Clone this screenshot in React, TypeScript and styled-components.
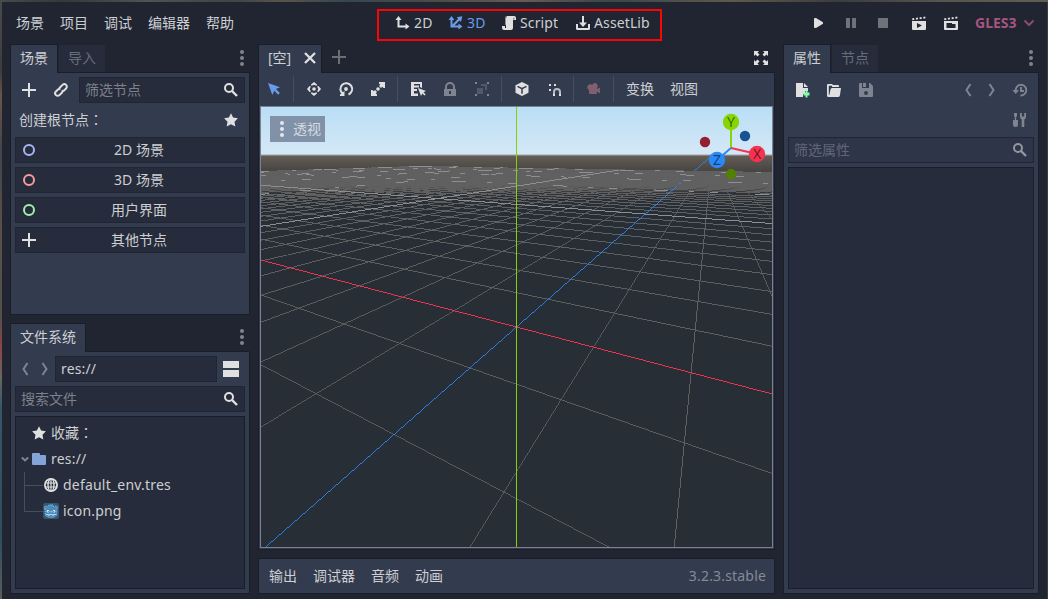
import React from "react";
import styled, { createGlobalStyle } from "styled-components";

const color = {
  base: "#333b4f",
  field: "#262c3b",
  window: "#202531",
  edge: "#1a1e28",
  text: "#cdcfd2",
  dim: "#7f8590",
  icon: "#e0e0e0",
  accent: "#699ce8",
};

const GlobalStyle = createGlobalStyle`
  * { box-sizing: border-box; }
  body {
    margin: 0;
    overflow: hidden;
    background: ${color.window};
    color: ${color.text};
    font: 14px/20px "Noto Sans", "Noto Sans CJK SC", sans-serif;
  }
  svg { display: block; flex: none; }
`;

/* ---------- Icons ---------- */

const glyphs: Record<string, React.ReactNode> = {
  add: <path d="M7 1v6H1v2h6v6h2V9h6V7H9V1z" />,
  link: (
    <g fill="none" stroke="currentColor" strokeWidth="2" transform="rotate(-45 8 8)">
      <path d="M7.500 5.500H3.300a2.500 2.500 0 0 0 0 5h3.400a2.500 2.500 0 0 0 2.300-1.500" />
      <path d="M8.500 10.500h4.200a2.500 2.500 0 0 0 0-5H9.300A2.500 2.500 0 0 0 7 7" />
    </g>
  ),
  search: (
    <g fill="none" stroke="currentColor">
      <circle cx="6" cy="6" r="4" strokeWidth="2" />
      <path d="M9 9l5 5" strokeWidth="2.400" />
    </g>
  ),
  star: <path d="M8 1.300l2.100 4.300 4.800.700-3.400 3.400.8 4.800L8 12.300l-4.300 2.200.8-4.800L1.100 6.300l4.800-.7z" />,
  ring: <circle cx="8" cy="8" r="5" fill="none" stroke="currentColor" strokeWidth="2" />,
  dots: (
    <>
      <circle cx="8" cy="2" r="2" />
      <circle cx="8" cy="8" r="2" />
      <circle cx="8" cy="14" r="2" />
    </>
  ),
  prev: <path d="M10.500 2L6.500 8l4 6" fill="none" stroke="currentColor" strokeWidth="2" />,
  next: <path d="M5.500 2l4 6-4 6" fill="none" stroke="currentColor" strokeWidth="2" />,
  split: <path d="M0 0h16v7H0zM0 9h16v7H0z" />,
  fold: <path d="M4.800 6.500L8 9.500l3.200-3" fill="none" stroke="currentColor" strokeWidth="2" />,
  folder: <path d="M2 2a1 1 0 0 0-1 1v10a1 1 0 0 0 1 1h12a1 1 0 0 0 1-1V5a1 1 0 0 0-1-1H9V3a1 1 0 0 0-1-1z" />,
  globe: (
    <g fill="none" stroke="currentColor" strokeWidth="1.800">
      <circle cx="8" cy="8" r="6.100" />
      <ellipse cx="8" cy="8" rx="3" ry="6.100" strokeWidth="1.400" />
      <path d="M2 6h12M2 10h12M8 2v12" strokeWidth="1.200" />
    </g>
  ),
  robot: (
    <>
      <rect width="16" height="16" rx="2" fill="#355570" />
      <path d="M2 6l-.8-2 1.900-1.300 1.600 1 .8-.2L5.700 2l1.600-.4.5 1.200h.4l.5-1.200 1.600.4.2 1.500.8.200 1.600-1 1.900 1.300L14 6v6Q12 14.500 8 14.500T2 12z" fill="#478cbf" stroke="#a9d3f0" strokeWidth=".8" strokeDasharray="1 1" />
      <circle cx="5" cy="8.200" r="1.200" fill="#fff" />
      <circle cx="11" cy="8.200" r="1.200" fill="#fff" />
      <circle cx="5.200" cy="8.300" r=".6" fill="#414042" />
      <circle cx="10.800" cy="8.300" r=".6" fill="#414042" />
      <path d="M8 8v1.500M3 11.500h2.500v.8h1v-.8h3v.8h1v-.8H13" fill="none" stroke="#e8f3fb" strokeWidth=".7" />
    </>
  ),
  axes2d: <path d="M3.500 1L.5 5h2v7.500h8v2l4-3-4-3v2h-6V5h2z" />,
  axes3d: (
    <path d="M3.500 1L.5 5h2v7.500h8v2l4-3-4-3v2H6.500l5-5L13 7l1.300-5.800L8.700 2.200l1.500 1.600-5.700 5.600V5h2z" />
  ),
  script: (
    <>
      <path d="M6 1v1a1 1 0 0 0-1 1v10H4v-2H1v2a2 2 0 0 0 2 2h7a2 2 0 0 0 2-2V5h3V3a2 2 0 0 0-2-2z" />
      <path d="M6 1a2 2 0 0 0-2 2v7h1V3a1 1 0 0 1 1-1zM12 2.500v2h1.700V3.200z" fill="#8d9098" />
    </>
  ),
  download: <path d="M7 1v6.500H4L8 12l4-4.500H9V1zM1 9v4.500a1.500 1.500 0 0 0 1.500 1.500h11a1.500 1.500 0 0 0 1.500-1.500V9h-2v4H3V9z" />,
  play: <path d="M4 3.800Q4 3 5 3h1l7 4.200v1.600L6 13H5q-1 0-1-.8z" />,
  pause: <path d="M3 3h4v10H3zM9 3h4v10H9z" />,
  stop: <path d="M3 3h10v10H3z" />,
  playScene: (
    <>
      <path d="M1 6h14v8a1 1 0 0 1-1 1H2a1 1 0 0 1-1-1zm5 2v5l5-2.500z" fillRule="evenodd" />
      <path d="M1 3.400l2-.4.5 1.800-2 .4zM4.700 2.900l2-.4.5 1.800-2 .4zM8.400 2.400l2-.4.5 1.800-2 .4zM12.100 1.900l2-.4.500 1.800-2 .4z" />
    </>
  ),
  playCustom: (
    <>
      <path d="M1 6h14v8a1 1 0 0 1-1 1H2a1 1 0 0 1-1-1zm2.500 2v5h9V9H9V8z" fillRule="evenodd" />
      <path d="M1 3.400l2-.4.5 1.800-2 .4zM4.700 2.900l2-.4.5 1.800-2 .4zM8.400 2.400l2-.4.5 1.800-2 .4zM12.100 1.900l2-.4.500 1.800-2 .4z" />
    </>
  ),
  down: <path d="M3.500 5.500L8 10l4.500-4.500" fill="none" stroke="currentColor" strokeWidth="2" />,
  close: <path d="M3 3l10 10M13 3L3 13" fill="none" stroke="currentColor" strokeWidth="2.300" />,
  expand: (
    <path d="M1 1h5L4.500 2.500l2 2-2 2-2-2L1 6zM15 1v5l-1.500-1.500-2 2-2-2 2-2L10 1zM1 15v-5l1.500 1.500 2-2 2 2-2 2L6 15zM15 15h-5l1.500-1.500-2-2 2-2 2 2L15 10z" />
  ),
  select: <path d="M2 2l4.300 12 2-4.300 3.800 4 1.800-1.800-4-3.800L14 6.200z" />,
  move: (
    <>
      <circle cx="8" cy="8" r="1.800" />
      <path d="M8 1L5 3.500v1h1.500L8 3.700l1.500.8H11v-1zM8 15l-3-2.500v-1h1.500l1.500.8 1.500-.8H11v1zM1 8l2.500-3h1v1.500L3.700 8l.8 1.500V11h-1zM15 8l-2.500-3h-1v1.500l.8 1.500-.8 1.500V11h1z" />
    </>
  ),
  rotate: (
    <>
      <circle cx="8" cy="8" r="1.900" />
      <path d="M4.800 12.800a5.900 5.900 0 1 1 5.700.7" fill="none" stroke="currentColor" strokeWidth="2" />
      <path d="M6.500 10v5H2v-1.500z" />
    </>
  ),
  scale: (
    <>
      <circle cx="8" cy="8" r="1.800" />
      <path d="M9 1h6v6h-1.500L12.300 5.800 11 7 9 5l1.200-1.300L9 2.500zM7 15H1V9h1.500l1.200 1.200L5 9l2 2-1.200 1.300L7 13.500z" />
    </>
  ),
  listSelect: (
    <>
      <path d="M1 1h11v6l-2-1V3H4v1.500h5v2H4V8h3v2H4v2.500h4V15H1z" />
      <path d="M8 7l3 8 1.300-2.600 2.200 2.200 1.200-1.200-2.200-2.200L16 10z" />
    </>
  ),
  lock: (
    <path d="M8 1a5 5 0 0 0-5 5v2H2v7h12V8h-1V6a5 5 0 0 0-5-5zm0 2a3 3 0 0 1 3 3v2H5V6a3 3 0 0 1 3-3zM7 10h2v3H7z" fillRule="evenodd" />
  ),
  group: (
    <>
      <path d="M3 7h6v6H3zM7 3h6v6h-2V5H7z" opacity=".42" />
      <path d="M1 1h2v2H1zM13 1h2v2h-2zM1 13h2v2H1zM13 13h2v2h-2z" />
    </>
  ),
  cube: (
    <>
      <path d="M8 1l6.500 3.200v7.600L8 15l-6.500-3.200V4.200z" />
      <path d="M3.500 5.400L8 7.700l4.500-2.300M8 7.700v5.100" fill="none" stroke="#333b4f" strokeWidth="1.500" />
    </>
  ),
  snap: (
    <>
      <path d="M3 3h2v2H3zM8 3h2v2H8zM3 8h2v2H3z" />
      <path d="M8 15v-4a3 3 0 0 1 6 0v4" fill="none" stroke="#b9bcc6" strokeWidth="2" />
      <path d="M7 13h2v2H7zM13 13h2v2h-2z" />
    </>
  ),
  camera: (
    <path d="M9 2a3 3 0 0 0-2.800 2A3 3 0 1 0 3 9v3a1 1 0 0 0 1 1h6a1 1 0 0 0 1-1v-1.500l3 2v-6l-3 1.500V7a3 3 0 0 0-2-5z" />
  ),
  newFile: (
    <>
      <path d="M2 1v14h7v-3h2V9h3V6H9V1zM10 1v4h4z" />
      <path d="M10 10h2V8h2v2h2v3h-2v2h-2v-2h-2z" fill="#7dffa8" transform="translate(-.5 .5)" />
    </>
  ),
  open: (
    <path d="M2 2a1 1 0 0 0-1 1v10.500Q1 15 2.500 15H12q1.500 0 1.900-1.500L15 6H6q-1.300 0-1.500 1.500L3.300 13H2.800V3.800H6V5h7V4q0-1-1-1H7L6 2z" />
  ),
  save: (
    <path d="M2 1a1 1 0 0 0-1 1v12a1 1 0 0 0 1 1h12a1 1 0 0 0 1-1V4l-3-3h-1v5H4V1zm3 0h3v4H5zM8 9a2 2 0 1 1 0 4 2 2 0 0 1 0-4z" fillRule="evenodd" />
  ),
  history: (
    <>
      <path d="M3.700 8.500a5.300 5.300 0 1 1 4.800 4.900M9 5v4h3" fill="none" stroke="currentColor" strokeWidth="1.900" />
      <path d="M.5 8h6.500L3.700 12z" />
    </>
  ),
  tools: (
    <path d="M2 1h3v3l-.8 1v3H6v5q0 2-2.500 2T1 13V8h1.800V5L2 4zM8 1h1.800v3.500h2.400V1H14v4q0 1.500-1.700 2.500V15H9.700V7.500Q8 6.500 8 5z" />
  ),
};

const Icon = ({ name, tint = color.icon }: { name: string; tint?: string }) => (
  <svg width="16" height="16" viewBox="0 0 16 16" fill="currentColor" color={tint}>
    {glyphs[name]}
  </svg>
);

/* ---------- Shell ---------- */

const Desktop = styled.div`
  width: 1048px;
  height: 599px;
  padding: 2px 1px 0 2px;
  background:
    linear-gradient(90deg, #4a4a48, #33383a 6%, #50534f 14%, #3c4547 22%, #5a5348 27%, #33474f 33%, #4c4c44 42%, #6a5a50 50%, #3a4648 58%, #5f594a 70%, #3b3c3d 80%, #55564e 90%, #625d50) top / 100% 2px no-repeat,
    linear-gradient(#4a4a48, #3b3d3d 12%, #6b5547 16%, #41454a 25%, #5a4f48 38%, #534f4b 53%, #8a4646 58%, #6a6660 63%, #35576b 68%, #304d60 90%, #5a5c58) left / 2px 100% no-repeat,
    #3a3d42;
`;

const Editor = styled.div`
  display: flex;
  flex-direction: column;
  height: 597px;
  background: ${color.window};
`;

const MenuBar = styled.header`
  display: flex;
  align-items: center;
  height: 42px;
  padding: 0 0 0 8px;
`;

const Group = styled.div<{ $w?: number; $gap?: number }>`
  display: flex;
  align-items: center;
  gap: ${(p) => p.$gap ?? 4}px;
  width: ${(p) => (p.$w ? `${p.$w}px` : "auto")};
`;

const TextButton = styled.button`
  border: 0;
  padding: 0 6px;
  background: none;
  color: inherit;
  font: inherit;
  white-space: nowrap;
`;

const Modes = styled.nav`
  display: flex;
  align-items: center;
  width: 285px;
  height: 32px;
  margin-top: 4px;
  padding: 0 0 4px 16px;
  border: 2px solid #fb0404;
`;

const Mode = styled.button<{ $w: number; $active?: boolean }>`
  display: flex;
  align-items: center;
  gap: 3px;
  width: ${(p) => p.$w}px;
  padding: 0;
  border: 0;
  background: none;
  color: ${(p) => (p.$active ? color.accent : color.text)};
  font: inherit;
  letter-spacing: 0.12px;
`;

const Runner = styled.div`
  display: flex;
  align-items: center;
  margin-left: 148px;
`;

const Playback = styled(Group)`
  margin-right: 20px;
  svg:first-child { margin-right: 1px; }
`;

const Renderer = styled.div`
  display: flex;
  align-items: center;
  gap: 4px;
  margin-left: 16px;
  color: #a6557f;
  font-weight: 700;
`;

const Main = styled.main`
  display: grid;
  grid-template-columns: 240px 517px 256px;
  gap: 8px;
  height: 550px;
  padding-left: 8px;
`;

const Column = styled.section`
  display: flex;
  flex-direction: column;
  gap: 8px;
`;

const Dock = styled.section<{ $h?: number }>`
  display: flex;
  flex-direction: column;
  height: ${(p) => (p.$h ? `${p.$h}px` : "auto")};
  flex: ${(p) => (p.$h ? "none" : "1")};
  min-height: 0;
`;

const TabStrip = styled.div`
  display: flex;
  align-items: flex-start;
  height: 29px;
  margin-bottom: -1px;
`;

const Tab = styled.div<{ $w: number; $active?: boolean }>`
  display: flex;
  align-items: center;
  gap: 11px;
  position: relative;
  width: ${(p) => p.$w}px;
  height: ${(p) => (p.$active ? 29 : 27)}px;
  margin: ${(p) => (p.$active ? "0 1px 0 0" : "1px 0 0")};
  padding: 0 0 ${(p) => (p.$active ? 3 : 1)}px 9px;
  border: solid ${color.edge};
  border-width: ${(p) => (p.$active ? "1px 1px 0" : "0")};
  background: ${(p) => (p.$active ? color.base : color.field)};
  color: ${(p) => (p.$active ? color.text : "#696d78")};
`;

const TabTools = styled.div<{ $pr: number }>`
  display: flex;
  flex: 1;
  justify-content: flex-end;
  padding: 6px ${(p) => p.$pr}px 0 0;
`;

const TabAdd = styled.div`
  padding: 5px 0 0 8px;
`;

const DockBody = styled.div<{ $pad?: number; $gap?: number }>`
  display: flex;
  flex-direction: column;
  flex: 1;
  gap: ${(p) => p.$gap ?? 4}px;
  min-height: 0;
  padding: ${(p) => p.$pad ?? 4}px;
  border: 1px solid ${color.edge};
  background: ${color.base};
`;

const Row = styled.div<{ $gap?: number }>`
  display: flex;
  align-items: center;
  flex: none;
  gap: ${(p) => p.$gap ?? 4}px;
  height: 26px;
`;

const IconButton = styled.button<{ $w?: number }>`
  display: flex;
  flex: none;
  align-items: center;
  justify-content: center;
  width: ${(p) => p.$w ?? 28}px;
  height: 26px;
  padding: 0;
  border: 0;
  background: none;
`;

const Spacer = styled.div`
  flex: 1;
`;

const Field = styled.div<{ $off?: boolean; $filled?: boolean }>`
  display: flex;
  flex: 1;
  align-items: center;
  justify-content: space-between;
  height: 26px;
  padding: 0 5px;
  border: 1px solid ${color.window};
  background: ${(p) => (p.$off ? "#2f3549" : color.field)};
  color: ${(p) => (p.$filled ? color.text : p.$off ? "#60667a" : "#7d818b")};
  letter-spacing: ${(p) => (p.$filled ? "0.15px" : "normal")};
`;

const Caption = styled.div`
  flex: 1;
  height: 20px;
  padding-left: 4px;
  line-height: 20px;
`;

const Colon = styled.span`
  font-family: "Noto Sans CJK TC", sans-serif;
  line-height: 1;
`;

const NodeButton = styled.button`
  display: grid;
  flex: none;
  grid-template-columns: 16px 1fr;
  align-items: center;
  height: 26px;
  padding: 0 0 0 5px;
  border: 1px solid ${color.window};
  background: ${color.field};
  color: inherit;
  font: inherit;
  text-align: center;
`;

const NodeLabel = styled.span`
  padding-right: 3px;
`;

const Well = styled.div`
  flex: 1;
  padding: 3px 0 0 4px;
  border: 1px solid ${color.edge};
  background: ${color.field};
`;

const TreeRow = styled.div<{ $indent: number }>`
  display: flex;
  align-items: center;
  gap: 4px;
  height: 26px;
  padding-left: ${(p) => p.$indent}px;
  letter-spacing: 0.2px;
`;

const Favorites = styled.span`
  height: 20px;
  letter-spacing: normal;
`;

const Twist = styled.span`
  display: flex;
  justify-content: center;
  width: 10px;
  margin-right: -3px;
`;

const Branches = styled.div`
  background:
    linear-gradient(#484d5b, #484d5b) 4px 0 / 1px 39px no-repeat,
    linear-gradient(#484d5b, #484d5b) 4px 13px / 19px 1px no-repeat,
    linear-gradient(#484d5b, #484d5b) 4px 39px / 19px 1px no-repeat;
`;

const ToolRow = styled.div`
  display: flex;
  flex: none;
  align-items: center;
  gap: 4px;
  height: 32px;
  padding: 0 0 0 1px;
`;

const ToolLabel = styled(TextButton)`
  padding-bottom: 1px;
`;

const Divider = styled.i`
  width: 4px;
  height: 26px;
  background: linear-gradient(#464d60, #464d60) 1px 0 / 1px 100% no-repeat;
`;

const Viewport = styled.div`
  position: relative;
  width: 513px;
  height: 442px;
  margin-left: 1px;
  border: 1px solid #7b8190;
`;

const ViewBadge = styled.div`
  position: absolute;
  left: 9px;
  top: 9px;
  display: flex;
  align-items: center;
  gap: 3px;
  width: 55px;
  height: 26px;
  padding-left: 4px;
  background: #8192a8;
  color: #d3d9e1;
`;

const BottomBar = styled.footer`
  display: flex;
  align-items: center;
  gap: 4px;
  height: 36px;
  padding: 0 8px 0 4px;
  border: 1px solid ${color.edge};
  background: ${color.base};
`;

const Version = styled.span`
  margin-left: auto;
  color: #858a95;
  letter-spacing: 0.18px;
`;

/* ---------- 3D scene ---------- */

const VIEW_W = 511;
const VIEW_H = 440;
const FOCAL = VIEW_H / 2 / Math.tan((35 * Math.PI) / 180);
const YAW = 0.5;
const PITCH = 0.5;
const DISTANCE = 4;
const EXTENT = 50;

type Camera3 = [number, number, number];

const toCamera = (x: number, z: number): Camera3 => {
  const right = x * Math.cos(YAW) - z * Math.sin(YAW);
  const near = x * Math.sin(YAW) + z * Math.cos(YAW);
  return [right, near * Math.sin(PITCH), DISTANCE - near * Math.cos(PITCH)];
};

const projectLine = (x1: number, z1: number, x2: number, z2: number) => {
  let a = toCamera(x1, z1);
  let b = toCamera(x2, z2);
  const NEAR = 0.3;
  if (a[2] < NEAR && b[2] < NEAR) return null;
  const clip = (p: Camera3, q: Camera3): Camera3 => {
    if (p[2] >= NEAR) return p;
    const t = (NEAR - p[2]) / (q[2] - p[2]);
    return [p[0] + (q[0] - p[0]) * t, p[1] + (q[1] - p[1]) * t, NEAR];
  };
  [a, b] = [clip(a, b), clip(b, a)];
  const px = (p: Camera3) => [VIEW_W / 2 + (p[0] * FOCAL) / p[2], VIEW_H / 2 + (p[1] * FOCAL) / p[2]];
  const [sx, sy] = px(a);
  const [ex, ey] = px(b);
  const length = Math.hypot(ex - sx, ey - sy);
  return {
    x1: sx,
    y1: sy,
    x2: ex,
    y2: ey,
    strokeWidth: Math.max(Math.abs(ex - sx), Math.abs(ey - sy)) / length,
  };
};

const gridLines = () => {
  const minor: React.ReactNode[] = [];
  const major: React.ReactNode[] = [];
  for (let i = -EXTENT; i <= EXTENT; i++) {
    if (i === 0) continue;
    const isMajor = i % 10 === 0;
    const pair = [projectLine(-EXTENT, i, EXTENT, i), projectLine(i, -EXTENT, i, EXTENT)];
    pair.forEach((line, k) => {
      if (!line) return;
      const far = Math.abs(i) > 10;
      (isMajor ? major : minor).push(
        <line
          key={`${i}-${k}`}
          {...line}
          stroke={isMajor ? "#8f8f8f" : "#606060"}
          strokeDasharray={isMajor && far ? (k ? "9 17 4 23 12 31" : "14 21 5 16 8 37") : undefined}
        />
      );
    });
  }
  return [...minor, ...major];
};

const Scene = () => (
  <svg width={VIEW_W} height={VIEW_H} viewBox={`0 0 ${VIEW_W} ${VIEW_H}`}>
    <defs>
      <linearGradient id="sky" x1="0" y1="0" x2="0" y2="1">
        <stop offset="0" stopColor="#b9def5" />
        <stop offset="1" stopColor="#d5e8f6" />
      </linearGradient>
      <linearGradient id="ground" x1="0" y1="0" x2="0" y2="1">
        <stop offset="0" stopColor="#655d55" />
        <stop offset=".15" stopColor="#55504b" />
        <stop offset=".35" stopColor="#43413f" />
        <stop offset=".65" stopColor="#30343a" />
        <stop offset="1" stopColor="#282e35" />
      </linearGradient>
      <linearGradient id="haze" gradientUnits="userSpaceOnUse" x1="0" y1="59" x2="0" y2="86">
        <stop offset="0" stopColor="#616161" />
        <stop offset=".72" stopColor="#616161" />
        <stop offset="1" stopColor="#616161" stopOpacity="0" />
      </linearGradient>
    </defs>
    <rect width="511" height="48" fill="url(#sky)" />
    <rect y="49" width="511" height="391" fill="#282e35" />
    <rect y="49" width="511" height="50" fill="url(#ground)" />
    <rect y="47" width="511" height="1" fill="#b8c4ce" />
    <rect y="48" width="511" height="1" fill="#84878a" />
    <g shapeRendering="crispEdges">
      <path d="M0 64L157 59L511 65V86H0z" fill="url(#haze)" />
      {gridLines()}
      <line {...projectLine(-400, 0, 400, 0)!} stroke="#f53350" />
      <g stroke="#2a89f4">
        <line {...projectLine(0, -24, 0, 50)!} strokeWidth=".88" />
        <line {...projectLine(0, -400, 0, -50)!} strokeWidth=".88" />
        <line {...projectLine(0, -33, 0, -24)!} strokeWidth=".88" strokeDasharray="3 3" />
      </g>
      <rect x="255" y="0" width="1" height="440" fill="#87d003" />
    </g>
    <g strokeWidth="2">
      <path d="M470 41V15" stroke="#87d603" />
      <path d="M470 41l26 6" stroke="#f53350" />
      <path d="M470 41l-14 12" stroke="#2a89f4" />
    </g>
    <circle cx="444" cy="35" r="5.200" fill="#931f30" />
    <circle cx="484" cy="29" r="5.200" fill="#195292" />
    <circle cx="470" cy="67" r="5.200" fill="#518002" />
    <circle cx="470" cy="15" r="8.200" fill="#87d603" />
    <circle cx="496" cy="47" r="8.200" fill="#f53350" />
    <circle cx="456" cy="53" r="8.200" fill="#2a89f4" />
    <g fontFamily="Noto Sans" fontSize="14" textAnchor="middle" fill="#000" fillOpacity=".55">
      <text x="470" y="20">Y</text>
      <text x="496" y="52">X</text>
      <text x="456" y="58">Z</text>
    </g>
  </svg>
);

/* ---------- Docks ---------- */

const Kebab = () => (
  <TabTools $pr={0}>
    <Icon name="dots" tint="#7f838c" />
  </TabTools>
);

const rootNodes = [
  { label: "2D 场景", icon: "ring", tint: "#a5b7f3" },
  { label: "3D 场景", icon: "ring", tint: "#fb9a9a" },
  { label: "用户界面", icon: "ring", tint: "#a5efac" },
  { label: "其他节点", icon: "add", tint: color.icon },
];

const SceneDock = () => (
  <Dock $h={271}>
    <TabStrip>
      <Tab $w={48} $active>场景</Tab>
      <Tab $w={46}>导入</Tab>
      <Kebab />
    </TabStrip>
    <DockBody>
      <Row>
        <IconButton><Icon name="add" /></IconButton>
        <IconButton><Icon name="link" /></IconButton>
        <Field>筛选节点<Icon name="search" /></Field>
      </Row>
      <Row>
        <Caption>创建根节点<Colon>：</Colon></Caption>
        <IconButton><Icon name="star" /></IconButton>
      </Row>
      {rootNodes.map((n) => (
        <NodeButton key={n.label}>
          <Icon name={n.icon} tint={n.tint} />
          <NodeLabel>{n.label}</NodeLabel>
        </NodeButton>
      ))}
    </DockBody>
  </Dock>
);

const FileDock = () => (
  <Dock>
    <TabStrip>
      <Tab $w={76} $active>文件系统</Tab>
      <Kebab />
    </TabStrip>
    <DockBody>
      <Row $gap={0}>
        <IconButton $w={20}><Icon name="prev" tint={color.dim} /></IconButton>
        <IconButton $w={20}><Icon name="next" tint={color.dim} /></IconButton>
        <Field $filled>res://</Field>
        <IconButton><Icon name="split" /></IconButton>
      </Row>
      <Row><Field>搜索文件<Icon name="search" /></Field></Row>
      <Well>
        <TreeRow $indent={11}>
          <Icon name="star" />
          <Favorites>收藏<Colon>：</Colon></Favorites>
        </TreeRow>
        <TreeRow $indent={0}>
          <Twist><Icon name="fold" tint={color.dim} /></Twist>
          <Icon name="folder" tint="#84a3d6" />res://
        </TreeRow>
        <Branches>
          <TreeRow $indent={23}><Icon name="globe" />default_env.tres</TreeRow>
          <TreeRow $indent={23}><Icon name="robot" />icon.png</TreeRow>
        </Branches>
      </Well>
    </DockBody>
  </Dock>
);

const Inspector = () => (
  <Dock>
    <TabStrip>
      <Tab $w={48} $active>属性</Tab>
      <Tab $w={46}>节点</Tab>
      <Kebab />
    </TabStrip>
    <DockBody>
      <Row>
        <IconButton><Icon name="newFile" /></IconButton>
        <IconButton><Icon name="open" /></IconButton>
        <IconButton><Icon name="save" tint={color.dim} /></IconButton>
        <Spacer />
        <IconButton $w={20}><Icon name="prev" tint={color.dim} /></IconButton>
        <IconButton $w={20}><Icon name="next" tint={color.dim} /></IconButton>
        <IconButton><Icon name="history" tint={color.dim} /></IconButton>
      </Row>
      <Row>
        <Spacer />
        <IconButton><Icon name="tools" tint={color.dim} /></IconButton>
      </Row>
      <Row><Field $off>筛选属性<Icon name="search" tint="#92969f" /></Field></Row>
      <Well />
    </DockBody>
  </Dock>
);

const toolGroups: { icon: string; tint?: string }[][] = [
  [{ icon: "select", tint: color.accent }],
  [{ icon: "move" }, { icon: "rotate" }, { icon: "scale" }],
  [{ icon: "listSelect" }, { icon: "lock", tint: color.dim }, { icon: "group", tint: color.dim }],
  [{ icon: "cube" }, { icon: "snap" }],
  [{ icon: "camera", tint: "#80606f" }],
];

const Canvas3D = () => (
  <Dock>
    <TabStrip>
      <Tab $w={64} $active>
        [空]
        <Icon name="close" />
      </Tab>
      <TabAdd><Icon name="add" tint="#6d6f72" /></TabAdd>
      <TabTools $pr={6}><Icon name="expand" /></TabTools>
    </TabStrip>
    <DockBody $pad={0} $gap={1}>
      <ToolRow>
        {toolGroups.map((tools, i) => (
          <React.Fragment key={i}>
            {tools.map((t) => (
              <IconButton key={t.icon}><Icon name={t.icon} tint={t.tint} /></IconButton>
            ))}
            <Divider />
          </React.Fragment>
        ))}
        <ToolLabel>变换</ToolLabel>
        <ToolLabel>视图</ToolLabel>
      </ToolRow>
      <Viewport>
        <Scene />
        <ViewBadge><Icon name="dots" tint="#e3e6ea" />透视</ViewBadge>
      </Viewport>
    </DockBody>
  </Dock>
);

export default function App() {
  return (
    <Desktop>
      <GlobalStyle />
      <Editor>
        <MenuBar>
          <Group $w={367}>
            {["场景", "项目", "调试", "编辑器", "帮助"].map((m) => (
              <TextButton key={m}>{m}</TextButton>
            ))}
          </Group>
          <Modes>
            <Mode $w={53}><Icon name="axes2d" />2D</Mode>
            <Mode $w={53} $active><Icon name="axes3d" tint={color.accent} />3D</Mode>
            <Mode $w={74}><Icon name="script" />Script</Mode>
            <Mode $w={80}><Icon name="download" />AssetLib</Mode>
          </Modes>
          <Runner>
            <Playback $gap={16}>
              <Icon name="play" />
              <Icon name="pause" tint="#6f727b" />
              <Icon name="stop" tint="#6f727b" />
            </Playback>
            <Group $gap={16}>
              <Icon name="playScene" />
              <Icon name="playCustom" />
            </Group>
            <Renderer>GLES3<Icon name="down" tint="#8c4b70" /></Renderer>
          </Runner>
        </MenuBar>
        <Main>
          <Column>
            <SceneDock />
            <FileDock />
          </Column>
          <Column>
            <Canvas3D />
            <BottomBar>
              {["输出", "调试器", "音频", "动画"].map((m) => (
                <TextButton key={m}>{m}</TextButton>
              ))}
              <Version>3.2.3.stable</Version>
            </BottomBar>
          </Column>
          <Inspector />
        </Main>
      </Editor>
    </Desktop>
  );
}
